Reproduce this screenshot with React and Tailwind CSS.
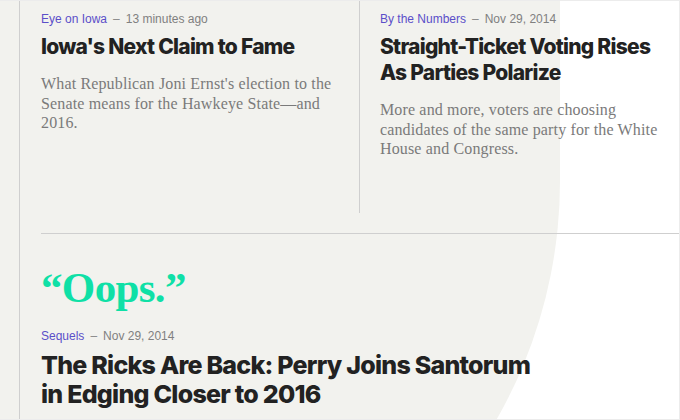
import React from "react";

const sans = { fontFamily: "Inter, 'Liberation Sans', sans-serif" };

const stories = [
  {
    id: 1,
    kicker: "Eye on Iowa",
    time: "13 minutes ago",
    title: ["Iowa's Next Claim to Fame"],
    dek: "What Republican Joni Ernst's election to the Senate means for the Hawkeye State\u2014and 2016.",
  },
  {
    id: 2,
    kicker: "By the Numbers",
    time: "Nov 29, 2014",
    title: ["Straight-Ticket Voting Rises", "As Parties Polarize"],
    dek: "More and more, voters are choosing candidates of the same party for the White House and Congress.",
  },
];

const Kicker = ({ label, time }) => (
  <div className="flex items-center text-[12px] leading-[16px] font-['Liberation_Sans',sans-serif]">
    <span className="text-[#5b4fc9]">{label}</span>
    <span className="mx-[6px] text-[#888]">–</span>
    <span className="text-[#808080]">{time}</span>
  </div>
);

const StoryCard = ({ story, divider }) => (
  <div className={`h-[212px] pt-[10px] ${divider ? "border-l border-[#cfcfcf] pl-[20px] w-[321px]" : "pl-[21px] w-[340px]"}`}>
    <Kicker label={story.kicker} time={story.time} />
    <h2
      className="mt-[7px] text-[21px] leading-[26px] font-extrabold tracking-[-0.035em] text-[#222]"
      style={sans}
    >
      {story.title.map((line) => (
        <span key={line} className="block">{line}</span>
      ))}
    </h2>
    <p className="mt-[14px] w-[296px] text-[16px] leading-[19.5px] tracking-[0.15px] text-[#7a7a7a] font-['Liberation_Serif',serif]">
      {story.dek}
    </p>
  </div>
);

export default function App() {
  return (
    <div className="relative w-[680px] h-[420px] overflow-hidden bg-white border-t border-r border-b border-[#ececec]">
      {/* background swoosh */}
      <div className="absolute left-0 top-0 w-[560px] h-[660px] bg-[#f2f2ee] rounded-br-[480px]" />

      <div className="relative ml-[19px] h-full border-l border-[#cfcfcf]">
        {/* Top stories */}
        <div className="flex">
          {stories.map((s, i) => (
            <StoryCard key={s.id} story={s} divider={i === 1} />
          ))}
        </div>

        <div className="mt-[20px] ml-[21px] border-t border-[#cfcfcf]" />

        {/* Feature */}
        <div className="pl-[21px] pt-[32px]">
          <div className="text-[43px] leading-[44px] font-bold text-[#0fe0a6] tracking-[-0.015em] font-['Liberation_Serif',serif]">
            “Oops.”
          </div>
          <div className="mt-[18px]">
            <Kicker label="Sequels" time="Nov 29, 2014" />
          </div>
          <h1
            className="mt-[7px] text-[25px] leading-[29px] font-extrabold tracking-[-0.03em] text-[#222]"
            style={sans}
          >
            <span className="block">The Ricks Are Back: Perry Joins Santorum</span>
            <span className="block">in Edging Closer to 2016</span>
          </h1>
        </div>
      </div>
    </div>
  );
}
